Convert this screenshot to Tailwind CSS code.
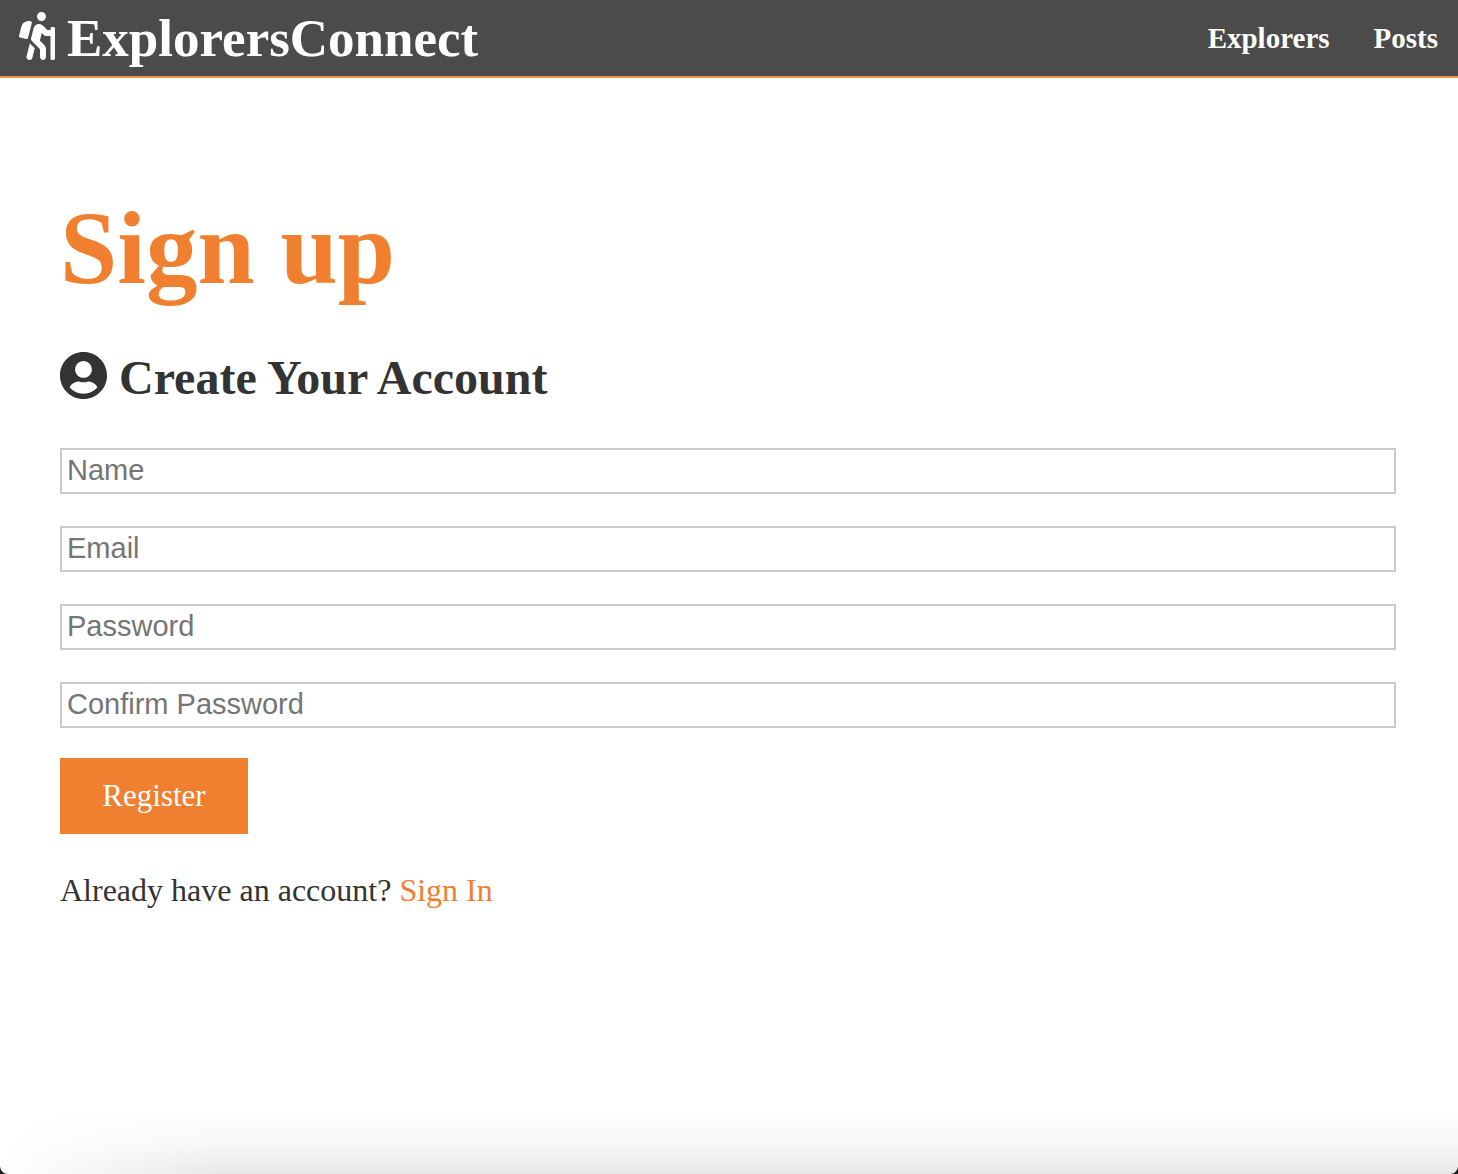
<!DOCTYPE html>
<html lang="en">
<head>
<meta charset="utf-8">
<meta name="viewport" content="width=device-width, initial-scale=1">
<title>ExplorersConnect</title>
<script src="https://cdn.jsdelivr.net/npm/@tailwindcss/browser@4"></script>
</head>
<body class="bg-[#1c1c1a] font-['Baskerville','Liberation_Serif',serif] text-[#333]">
<div class="relative flex min-h-screen flex-col overflow-hidden rounded-b-lg bg-white">
  <header class="flex h-[78px] items-center justify-between border-b-2 border-[#f4914f] bg-[#4b4b4b] pr-5 pl-[19px] font-bold text-white">
    <a href="#" class="flex items-center gap-3 text-[53px] leading-[72px]">
      <svg class="h-12 w-9 -mt-1" viewBox="0 0 384 512" fill="currentColor" aria-hidden="true"><path d="M80.95 472.23c-4.28 17.16 6.14 34.53 23.28 38.81 2.61.66 5.22.95 7.8.95 14.33 0 27.37-9.7 31.02-24.23l25.24-100.97-52.78-52.78-34.56 138.22zm14.89-196.12L137 117c2.19-8.42-3.14-16.95-11.92-19.06-43.88-10.52-88.35 15.07-99.32 57.17L.49 253.24c-2.19 8.42 3.14 16.95 11.92 19.06l63.56 15.25c8.79 2.1 17.68-3.02 19.87-11.44zM368 160h-16c-8.84 0-16 7.16-16 16v16h-34.75l-46.78-46.78C243.38 134.11 228.61 128 212.91 128c-27.02 0-50.47 18.3-57.03 44.52l-26.92 107.72a32.012 32.012 0 0 0 8.42 30.39L224 397.25V480c0 17.67 14.33 32 32 32s32-14.33 32-32v-82.75c0-17.09-6.66-33.16-18.75-45.25l-46.82-46.82c.15-.5.49-.89.62-1.41l19.89-79.57 22.43 22.43c6 6 14.14 9.38 22.62 9.38h48v240c0 8.84 7.16 16 16 16h16c8.84 0 16-7.16 16-16V176c.01-8.84-7.15-16-15.99-16zM240 96c26.51 0 48-21.49 48-48S266.51 0 240 0s-48 21.49-48 48 21.49 48 48 48z"/></svg>
      <span>ExplorersConnect</span>
    </a>
    <nav class="flex gap-11 text-[29px] leading-9">
      <a href="#">Explorers</a>
      <a href="#">Posts</a>
    </nav>
  </header>

  <main class="flex flex-col items-start pt-[110px] pr-[62px] pb-16 pl-[60px]">
    <h1 class="text-[103px] leading-[120px] font-bold text-[#f08030]">Sign up</h1>
    <h2 class="mt-10 flex items-start gap-3 font-['Liberation_Serif',serif] text-5xl leading-[60px] font-bold">
      <svg class="mt-1 size-[47px]" viewBox="0 8 496 496" fill="currentColor" aria-hidden="true"><path d="M248 8C111 8 0 119 0 256s111 248 248 248 248-111 248-248S385 8 248 8zm0 96c48.6 0 88 39.4 88 88s-39.4 88-88 88-88-39.4-88-88 39.4-88 88-88zm0 344c-58.7 0-111.3-26.6-146.5-68.2 18.8-35.4 55.6-59.8 98.5-59.8 2.4 0 4.8.4 7.1 1.1 13 4.2 26.6 6.9 40.9 6.9 14.3 0 28-2.7 40.9-6.9 2.3-.7 4.7-1.1 7.1-1.1 42.9 0 79.7 24.4 98.5 59.8C359.3 421.4 306.7 448 248 448z"/></svg>
      <span>Create Your Account</span>
    </h2>
    <form class="mt-10 flex w-full flex-col items-start gap-8 font-['Liberation_Sans',sans-serif] text-[29px]">
      <input type="text" aria-label="Name" placeholder="Name" class="h-[46px] w-full border-2 border-[#ccc] px-[5px] pb-0.5 leading-8 placeholder:text-[#757575]">
      <input type="email" aria-label="Email" placeholder="Email" class="h-[46px] w-full border-2 border-[#ccc] px-[5px] pb-0.5 leading-8 placeholder:text-[#757575]">
      <input type="password" aria-label="Password" placeholder="Password" class="h-[46px] w-full border-2 border-[#ccc] px-[5px] pb-0.5 leading-8 placeholder:text-[#757575]">
      <input type="password" aria-label="Confirm Password" placeholder="Confirm Password" class="h-[46px] w-full border-2 border-[#ccc] px-[5px] pb-0.5 leading-8 placeholder:text-[#757575]">
      <button type="submit" class="-mt-0.5 h-[76px] w-[188px] bg-[#f08030] font-['Baskerville','Liberation_Serif',serif] text-[31px] text-white">Register</button>
    </form>
    <p class="mt-9 text-[32px] leading-10">Already have an account? <a href="#" class="text-[#f08030]">Sign In</a></p>
  </main>

  <div class="pointer-events-none absolute inset-x-0 bottom-0 h-16 bg-linear-to-t from-black/9 via-black/3 to-transparent mask-l-from-85% mask-l-to-100%" aria-hidden="true"></div>
</div>
</body>
</html>
